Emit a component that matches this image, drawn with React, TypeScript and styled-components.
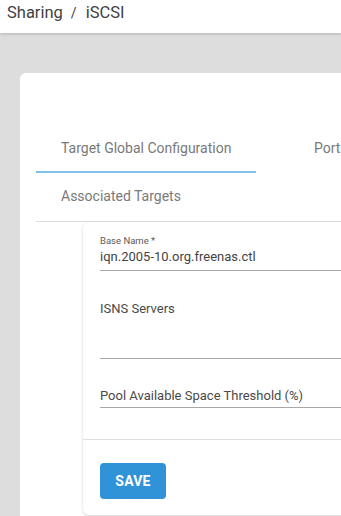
import * as React from "react";
import styled, { createGlobalStyle } from "styled-components";

const GlobalStyle = createGlobalStyle`
  html, body {
    margin: 0;
    padding: 0;
    background: #dddddd;
    font-family: Roboto, "Liberation Sans", sans-serif;
    overflow: hidden;
  }
`;

const Page = styled.div`
  width: 341px;
  height: 516px;
  overflow: hidden;
  background: #dddddd;
`;

const Header = styled.header`
  height: 33px;
  background: #ffffff;
  box-shadow: 0 1px 3px rgba(0, 0, 0, 0.2);
  display: flex;
  align-items: flex-start;
  padding: 3px 0 0 7px;
  box-sizing: border-box;
  font-size: 16.5px;
  line-height: 20px;
  color: #3f3f3f;
  position: relative;
  z-index: 1;
`;

const Crumb = styled.span``;

const Slash = styled.span`
  margin: 0 9px 0 8px;
  font-size: 14px;
`;

const Content = styled.main`
  padding: 40px 0 0 20px;
`;

const Card = styled.section`
  width: 420px;
  background: #ffffff;
  border-radius: 6px 0 0 0;
  padding: 52px 0 0 16px;
  box-sizing: border-box;
  min-height: 460px;
`;

const TabBar = styled.nav`
  display: flex;
  flex-wrap: wrap;
  border-bottom: 1px solid #dddddd;
`;

const Tab = styled.div<{ $active?: boolean; $width?: number; $pad?: number }>`
  height: 48px;
  box-sizing: border-box;
  display: flex;
  align-items: center;
  padding-left: ${(p) => p.$pad ?? 25}px;
  width: ${(p) => (p.$width ? `${p.$width}px` : "auto")};
  font-size: 14px;
  color: #797979;
  border-bottom: 2px solid ${(p) => (p.$active ? "#80bfea" : "transparent")};
  white-space: nowrap;
`;

const Row = styled.div`
  display: flex;
  width: 100%;
`;

const FormCard = styled.div`
  margin-left: 47px;
  background: #ffffff;
  border-radius: 6px;
  box-shadow: 0 1px 3px rgba(0, 0, 0, 0.18);
  height: 293px;
  display: flex;
  flex-direction: column;
`;

const Fields = styled.div`
  padding: 12px 0 31px 17px;
  border-bottom: 1px solid #dedede;
`;

const Field = styled.div<{ $gap?: number; $height?: number }>`
  margin-top: ${(p) => p.$gap ?? 0}px;
  min-height: ${(p) => p.$height ?? 0}px;
  border-bottom: 1px solid #a8a8a8;
  padding-bottom: 2px;
  box-sizing: border-box;
`;

const FloatLabel = styled.div`
  font-size: 9.5px;
  line-height: 14px;
  color: #5a5a5a;
`;

const Value = styled.div`
  font-size: 13px;
  line-height: 18px;
  color: #444444;
  padding-bottom: 2px;
`;

const Placeholder = styled.div`
  font-size: 13px;
  line-height: 18px;
  color: #4a4a4a;
`;

const Actions = styled.div`
  padding: 23px 0 0 17px;
`;

const SaveButton = styled.button`
  width: 66px;
  height: 36px;
  border: none;
  border-radius: 4px;
  background: #3193d7;
  color: #ffffff;
  font-family: Roboto, "Liberation Sans", sans-serif;
  font-weight: 700;
  font-size: 14px;
  letter-spacing: 0.2px;
`;

export default function App() {
  return (
    <Page>
      <GlobalStyle />
      <Header>
        <Crumb>Sharing</Crumb>
        <Slash>/</Slash>
        <Crumb>iSCSI</Crumb>
      </Header>
      <Content>
        <Card>
          <TabBar>
            <Row>
              <Tab $active $width={220}>
                Target Global Configuration
              </Tab>
              <Tab $pad={58}>Portals</Tab>
            </Row>
            <Row>
              <Tab>Associated Targets</Tab>
            </Row>
          </TabBar>
          <FormCard>
            <Fields>
              <Field>
                <FloatLabel>Base Name *</FloatLabel>
                <Value>iqn.2005-10.org.freenas.ctl</Value>
              </Field>
              <Field $gap={29} $height={59}>
                <Placeholder>ISNS Servers</Placeholder>
              </Field>
              <Field $gap={28}>
                <Placeholder>Pool Available Space Threshold (%)</Placeholder>
              </Field>
            </Fields>
            <Actions>
              <SaveButton type="button">SAVE</SaveButton>
            </Actions>
          </FormCard>
        </Card>
      </Content>
    </Page>
  );
}
